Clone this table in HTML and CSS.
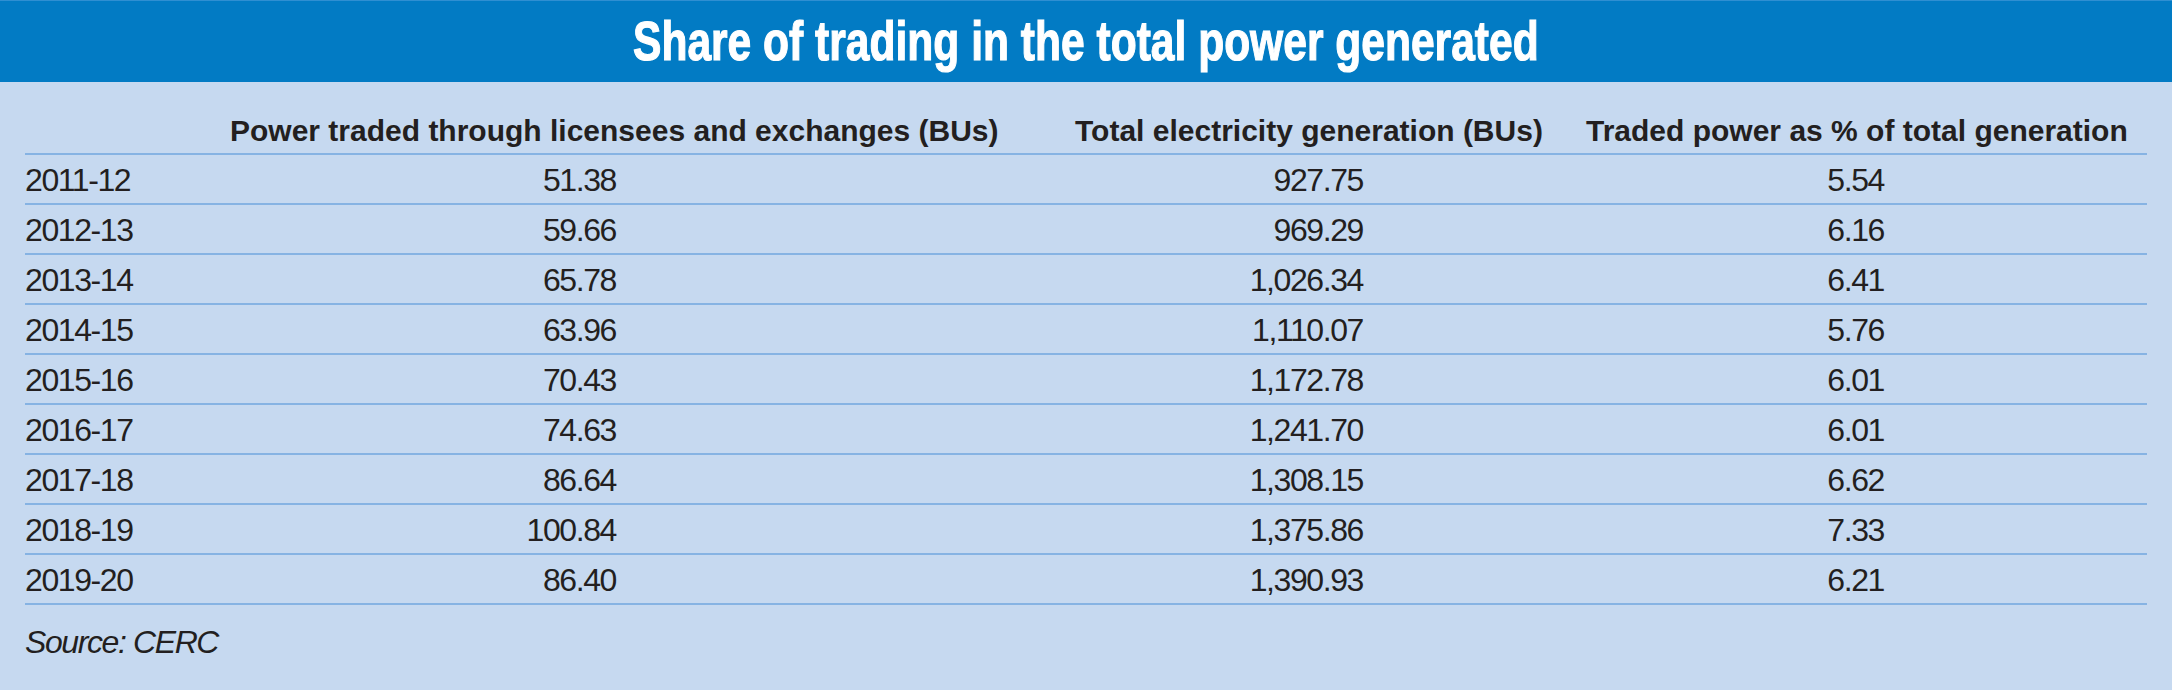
FILE: index.html
```html
<!DOCTYPE html>
<html lang="en">
<head>
<meta charset="utf-8">
<title>Share of trading in the total power generated</title>
<link rel="stylesheet" href="styles.css">
</head>
<body>
<div class="panel">
  <h1 class="title"><span class="title-text">Share of trading in the total power generated</span></h1>
  <div class="table">
    <div class="row head">
      <div class="cell year"></div>
      <div class="cell c1">Power traded through licensees and exchanges (BUs)</div>
      <div class="cell c2">Total electricity generation (BUs)</div>
      <div class="cell c3">Traded power as % of total generation</div>
    </div>
    <div class="row"><div class="cell year">2011-12</div><div class="cell c1">51.38</div><div class="cell c2">927.75</div><div class="cell c3">5.54</div></div>
    <div class="row"><div class="cell year">2012-13</div><div class="cell c1">59.66</div><div class="cell c2">969.29</div><div class="cell c3">6.16</div></div>
    <div class="row"><div class="cell year">2013-14</div><div class="cell c1">65.78</div><div class="cell c2">1,026.34</div><div class="cell c3">6.41</div></div>
    <div class="row"><div class="cell year">2014-15</div><div class="cell c1">63.96</div><div class="cell c2">1,110.07</div><div class="cell c3">5.76</div></div>
    <div class="row"><div class="cell year">2015-16</div><div class="cell c1">70.43</div><div class="cell c2">1,172.78</div><div class="cell c3">6.01</div></div>
    <div class="row"><div class="cell year">2016-17</div><div class="cell c1">74.63</div><div class="cell c2">1,241.70</div><div class="cell c3">6.01</div></div>
    <div class="row"><div class="cell year">2017-18</div><div class="cell c1">86.64</div><div class="cell c2">1,308.15</div><div class="cell c3">6.62</div></div>
    <div class="row"><div class="cell year">2018-19</div><div class="cell c1">100.84</div><div class="cell c2">1,375.86</div><div class="cell c3">7.33</div></div>
    <div class="row"><div class="cell year">2019-20</div><div class="cell c1">86.40</div><div class="cell c2">1,390.93</div><div class="cell c3">6.21</div></div>
  </div>
  <p class="source">Source: CERC</p>
</div>
</body>
</html>
```
FILE: styles.css
```css
html, body {
  margin: 0;
  padding: 0;
  background: #c6d9f0;
}

.panel {
  width: 2172px;
  height: 690px;
  background: #c6d9f0;
  color: #231f20;
  font-family: "Liberation Sans", Arial, sans-serif;
  overflow: hidden;
}

.title {
  margin: 0;
  height: 82px;
  background: #027bc4;
  border-top: 1px solid #2f8fd2;
  box-sizing: border-box;
  text-align: center;
  line-height: 80px;
  font-size: 56px;
  font-weight: 700;
  color: #ffffff;
}

.title-text {
  display: inline-block;
  transform: scaleX(0.76);
  transform-origin: center;
  -webkit-text-stroke: 1.2px #ffffff;
  white-space: nowrap;
}

.table {
  padding: 0 25px;
}

.row {
  display: grid;
  grid-template-columns: 205px 845px 511px 1fr;
  border-bottom: 2px solid #86b3e3;
}

.cell {
  font-size: 32px;
  letter-spacing: -1.4px;
  line-height: 45px;
  padding-top: 3px;
  white-space: nowrap;
}

.row .c1 { text-align: right; padding-right: 459px; }
.row .c2 { text-align: right; padding-right: 223px; }
.row .c3 { text-align: right; padding-right: 263px; }

.row.head .cell {
  font-size: 30px;
  font-weight: 700;
  letter-spacing: 0;
  line-height: 30px;
  padding-top: 34px;
  padding-bottom: 7px;
  padding-right: 0;
  text-align: left;
}

.source {
  margin: 17px 0 0 25px;
  font-size: 32px;
  font-style: italic;
  letter-spacing: -1.4px;
  line-height: 40px;
}
```
